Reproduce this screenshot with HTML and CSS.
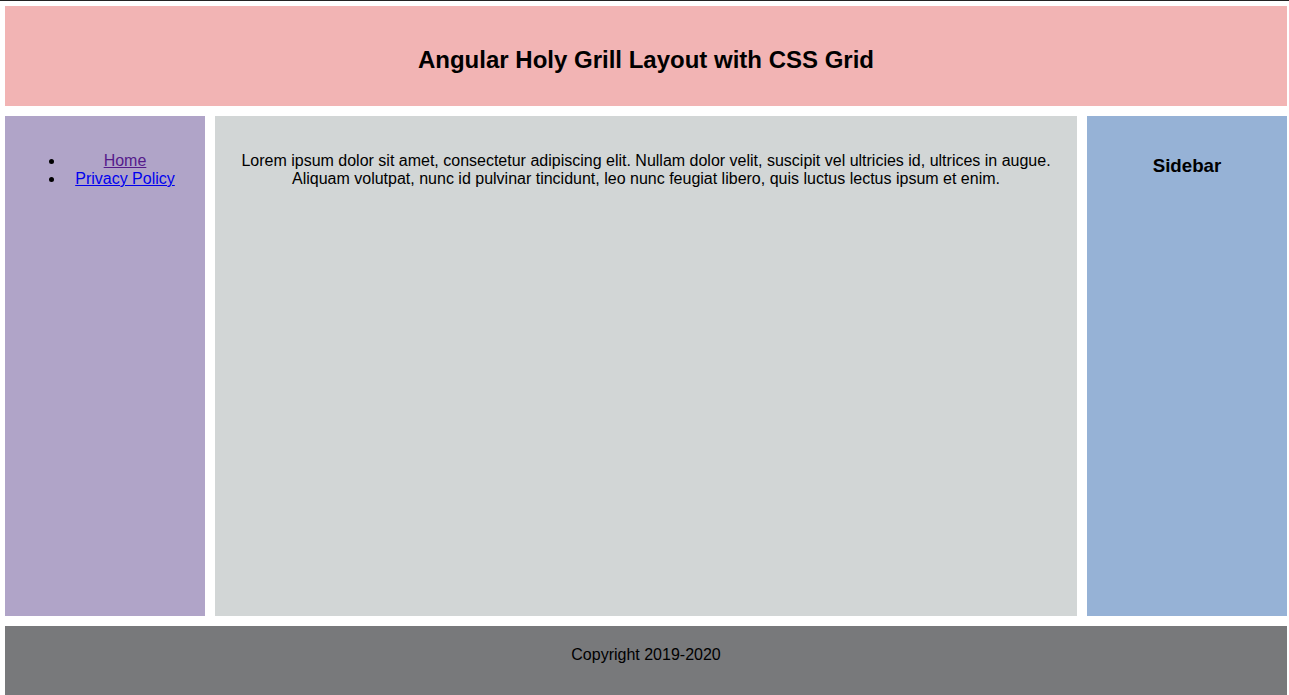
FILE: index.html
```html
<!DOCTYPE html>
<html>
<head>
<meta charset="utf-8">
<title>Angular Holy Grill Layout</title>
<link rel="stylesheet" href="styles.css">
</head>
<body>
<div class="topline"></div>
<div class="grid">
  <header class="header">
    <h2 class="title">Angular Holy Grill Layout with CSS Grid</h2>
  </header>
  <nav class="nav">
    <ul class="nav-list">
      <li><a class="visited" href="#">Home</a></li>
      <li><a class="link" href="#">Privacy Policy</a></li>
    </ul>
  </nav>
  <main class="main">
    <p class="text">Lorem ipsum dolor sit amet, consectetur adipiscing elit. Nullam dolor velit, suscipit vel ultricies id, ultrices in augue. Aliquam volutpat, nunc id pulvinar tincidunt, leo nunc feugiat libero, quis luctus lectus ipsum et enim.</p>
  </main>
  <aside class="sidebar">
    <h3 class="side-title">Sidebar</h3>
  </aside>
  <footer class="footer">Copyright 2019-2020</footer>
</div>
</body>
</html>
```

FILE: styles.css
```css
html, body {
  margin: 0;
  padding: 0;
  background: #ffffff;
  font-family: "Liberation Sans", Arial, sans-serif;
  font-size: 16px;
  color: #000;
}
.topline {
  height: 1px;
  background: #222222;
}
.grid {
  display: grid;
  grid-template-columns: 200px 1fr 200px;
  grid-template-rows: 100px 500px 80px;
  gap: 10px;
  padding: 5px 2px 0 5px;
  text-align: center;
}
.header {
  grid-column: 1 / 4;
  background: #f2b4b4;
  padding: 20px;
}
.title {
  margin: 19.92px 0;
  font-size: 24px;
  font-weight: bold;
}
.nav {
  background: #b0a4c8;
  padding: 20px;
}
.nav-list {
  margin: 16px 0;
  padding-left: 40px;
}
.visited { color: #551a8b; }
.link { color: #0000ee; }
.main {
  background: #d2d6d6;
  padding: 20px;
}
.text {
  margin: 16px 0;
}
.sidebar {
  background: #96b2d6;
  padding: 20px;
}
.side-title {
  margin: 18.72px 0;
  font-size: 18.72px;
}
.footer {
  grid-column: 1 / 4;
  background: #78797b;
  padding: 20px;
}
```
